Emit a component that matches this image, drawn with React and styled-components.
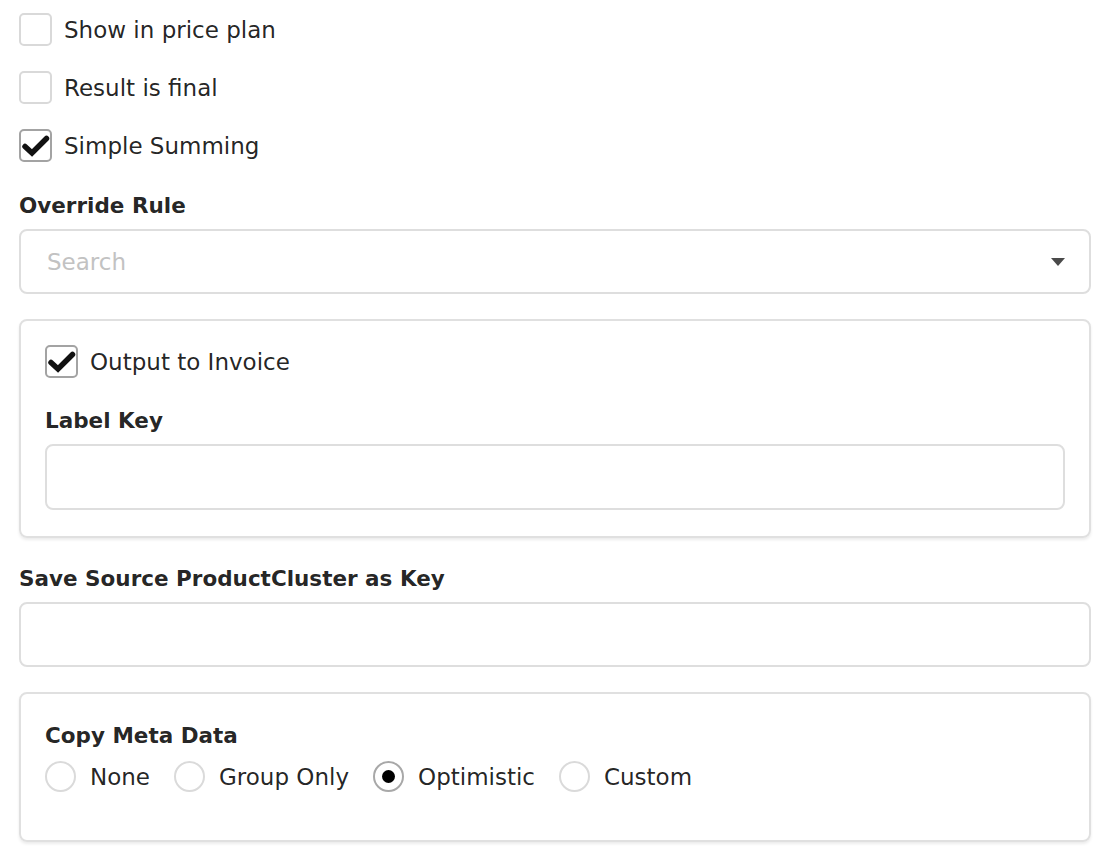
import React, { useState } from 'react';
import styled, { createGlobalStyle } from 'styled-components';

const GlobalStyle = createGlobalStyle`
  body {
    margin: 0;
    background: #ffffff;
    font-family: "DejaVu Sans", "Liberation Sans", sans-serif;
    color: rgba(0, 0, 0, 0.87);
  }
`;

const Form = styled.div`
  display: flex;
  flex-direction: column;
  width: 1072px;
  padding: 13px 0 20px 19px;
`;

const CheckRow = styled.label`
  display: flex;
  align-items: center;
  gap: 12px;
  height: 33px;
  margin-bottom: 25px;
  font-size: 23px;
  cursor: pointer;
`;

const Box = styled.span`
  box-sizing: border-box;
  width: 33px;
  height: 33px;
  flex: none;
  border: 2px solid ${props => (props.checked ? '#a3a3a3' : '#d9d9d9')};
  border-radius: 5px;
  background: #fff;
  display: flex;
  align-items: center;
  justify-content: center;
`;

const FieldLabel = styled.div`
  font-size: 21.5px;
  font-weight: bold;
  line-height: 26px;
  margin-top: ${props => props.top || 0}px;
  margin-bottom: 10px;
`;

const Dropdown = styled.div`
  box-sizing: border-box;
  height: 65px;
  border: 2px solid #dedede;
  border-radius: 8px;
  display: flex;
  align-items: center;
  justify-content: space-between;
  padding: 0 24px 0 26px;
`;

const Placeholder = styled.span`
  font-size: 23px;
  color: #c2c2c2;
`;

const TextInput = styled.input`
  display: block;
  box-sizing: border-box;
  width: 100%;
  height: ${props => props.h || 65}px;
  border: 2px solid #dedede;
  border-radius: 8px;
  padding: 0 26px;
  font-size: 23px;
  font-family: inherit;
  outline: none;
`;

const Panel = styled.div`
  display: flex;
  flex-direction: column;
  box-sizing: border-box;
  border: 2px solid #e0e0e0;
  border-radius: 8px;
  box-shadow: 0 2px 3px rgba(0, 0, 0, 0.08);
  padding: ${props => props.pad || '24px'};
  margin-top: 25px;
`;

const RadioGroup = styled.div`
  display: flex;
  align-items: center;
  height: 31px;
  margin-top: 2px;
`;

const RadioOption = styled.label`
  display: flex;
  align-items: center;
  gap: 14px;
  margin-right: 24px;
  font-size: 23px;
  cursor: pointer;
`;

const Circle = styled.span`
  box-sizing: border-box;
  width: 31px;
  height: 31px;
  flex: none;
  border-radius: 50%;
  border: 2px solid ${props => (props.checked ? '#a8a8a8' : '#dadada')};
  display: flex;
  align-items: center;
  justify-content: center;

  &::after {
    content: '';
    display: ${props => (props.checked ? 'block' : 'none')};
    width: 13px;
    height: 13px;
    border-radius: 50%;
    background: #000;
  }
`;

const Check = () => (
  <svg width="29" height="29" viewBox="0 0 29 29">
    <path d="M4 15.5 L11 22 L25.5 7.5" fill="none" stroke="#111" strokeWidth="5.5" strokeLinejoin="miter" strokeLinecap="round" />
  </svg>
);

const Checkbox = ({ label, checked, onToggle }) => (
  <CheckRow onClick={onToggle}>
    <Box checked={checked}>{checked && <Check />}</Box>
    {label}
  </CheckRow>
);

const Caret = () => (
  <svg width="14" height="8" viewBox="0 0 14 8">
    <path d="M0 0 H14 L7 8 Z" fill="#4a4a4a" />
  </svg>
);

const options = ['None', 'Group Only', 'Optimistic', 'Custom'];

export default function App() {
  const [checks, setChecks] = useState({ price: false, final: false, simple: true, invoice: true });
  const [meta, setMeta] = useState('Optimistic');
  const toggle = key => setChecks({ ...checks, [key]: !checks[key] });

  return (
    <>
      <GlobalStyle />
      <Form>
        <Checkbox label="Show in price plan" checked={checks.price} onToggle={() => toggle('price')} />
        <Checkbox label="Result is final" checked={checks.final} onToggle={() => toggle('final')} />
        <Checkbox label="Simple Summing" checked={checks.simple} onToggle={() => toggle('simple')} />

        <FieldLabel top={6}>Override Rule</FieldLabel>
        <Dropdown>
          <Placeholder>Search</Placeholder>
          <Caret />
        </Dropdown>

        <Panel pad="24px 24px 26px">
          <Checkbox label="Output to Invoice" checked={checks.invoice} onToggle={() => toggle('invoice')} />
          <FieldLabel top={5}>Label Key</FieldLabel>
          <TextInput h={66} />
        </Panel>

        <FieldLabel top={28}>Save Source ProductCluster as Key</FieldLabel>
        <TextInput />

        <Panel pad="29px 24px 48px">
          <FieldLabel>Copy Meta Data</FieldLabel>
          <RadioGroup>
            {options.map(opt => (
              <RadioOption key={opt} onClick={() => setMeta(opt)}>
                <Circle checked={meta === opt} />
                {opt}
              </RadioOption>
            ))}
          </RadioGroup>
        </Panel>
      </Form>
    </>
  );
}
